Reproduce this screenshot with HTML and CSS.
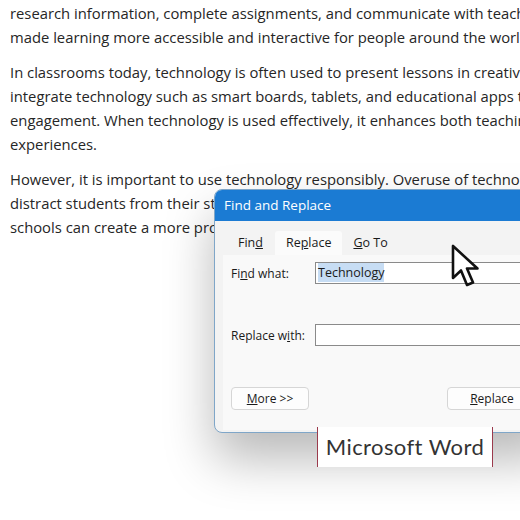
FILE: index.html
```html
<!DOCTYPE html>
<html>
<head>
    <title>Find and Replace</title>
    <link rel="stylesheet" href="styles.css">
</head>
<body>
    <div class="page">
        <p class="para">
            <span class="line">research information, complete assignments, and communicate with teachers and peers.</span>
            <span class="line">made learning more accessible and interactive for people around the world.</span>
        </p>
        <p class="para">
            <span class="line">In classrooms today, technology is often used to present lessons in creative ways.</span>
            <span class="line">integrate technology such as smart boards, tablets, and educational apps to boost</span>
            <span class="line">engagement. When technology is used effectively, it enhances both teaching and learning</span>
            <span class="line">experiences.</span>
        </p>
        <p class="para">
            <span class="line">However, it is important to use technology responsibly. Overuse of technology can</span>
            <span class="line">distract students from their studies and reduce face-to-face interaction. By balancing,</span>
            <span class="line">schools can create a more productive learning environment.</span>
        </p>
    </div>

    <div class="dialog">
        <div class="dialog-title">Find and Replace</div>
        <div class="dialog-body">
            <div class="tabs">
                <span class="tab">Fin<u>d</u></span>
                <span class="tab active">Re<u>p</u>lace</span>
                <span class="tab"><u>G</u>o To</span>
            </div>
            <div class="panel">
                <div class="field">
                    <label>Fi<u>n</u>d what:</label>
                    <div class="input"><span class="selected">Technology</span></div>
                </div>
                <div class="field replace-field">
                    <label>Replace w<u>i</u>th:</label>
                    <div class="input"></div>
                </div>
                <div class="buttons">
                    <button><u>M</u>ore &gt;&gt;</button>
                    <button class="replace-btn"><u>R</u>eplace</button>
                </div>
            </div>
        </div>
    </div>

    <div class="caption">Microsoft Word</div>

    <svg class="cursor" width="32" height="46" viewBox="0 0 32 46">
        <path d="M2 2 L2 34 L10 26.5 L16 41 L22 38.5 L16 24.5 L26.5 24.5 Z" fill="#fff" stroke="#111" stroke-width="2.6" stroke-linejoin="round"/>
    </svg>
</body>
</html>
```

FILE: styles.css
```css
body {
    margin: 0;
    width: 520px;
    height: 520px;
    overflow: hidden;
    position: relative;
    background: #fff;
    font-family: 'Open Sans', sans-serif;
}
.page {
    padding: 1px 0 0 10px;
    color: #262626;
    font-size: 14.8px;
}
.para {
    margin: 0 0 11px;
}
.line {
    display: block;
    white-space: nowrap;
    line-height: 24px;
}
.dialog {
    position: absolute;
    left: 214px;
    top: 189px;
    width: 340px;
    height: 242px;
    background: #f3f3f3;
    border: 1px solid #7fa6c8;
    border-radius: 8px;
    overflow: hidden;
    box-shadow: 0 26px 50px rgba(0, 0, 0, 0.28);
    font-size: 12px;
    color: #1a1a1a;
}
.dialog-title {
    background: #1b7bd3;
    color: #fff;
    height: 31px;
    line-height: 31px;
    padding-left: 9px;
    font-size: 13.5px;
}
.dialog-body {
    padding: 10px 0 0 8px;
}
.tabs {
    display: flex;
    height: 24px;
    padding-left: 4px;
    font-size: 12.5px;
}
.tab {
    padding: 0 11px;
    line-height: 24px;
}
.tab.active {
    background: #fbfbfb;
    border-radius: 3px 3px 0 0;
    padding: 0 11px;
    margin-left: 1px;
}
.panel {
    background: #f9f9f9;
    height: 168px;
    padding: 7px 0 0 8px;
}
.field {
    display: flex;
    align-items: center;
}
.field label {
    width: 84px;
}
.replace-field {
    margin-top: 40px;
}
.input {
    flex: 1;
    height: 20px;
    background: #fff;
    border: 1px solid #8a8a8a;
    padding: 0 2px;
    line-height: 20px;
    font-size: 12.5px;
}
.selected {
    background: #c7ddf4;
    padding: 1px 0;
}
.buttons {
    display: flex;
    justify-content: space-between;
    margin-top: 41px;
}
button {
    font-family: 'Open Sans', sans-serif;
    font-size: 12px;
    color: #1a1a1a;
    background: #fdfdfd;
    border: 1px solid #d6d6d6;
    border-radius: 4px;
    height: 23px;
    width: 78px;
    padding: 0;
}
.replace-btn {
    width: 90px;
    margin-right: 18px;
}
.caption {
    position: absolute;
    left: 317px;
    top: 427px;
    width: 174px;
    height: 40px;
    background: #fff;
    border-left: 1px solid #9b3a4c;
    border-right: 1px solid #9b3a4c;
    text-align: center;
    line-height: 40px;
    font-family: 'Lato', sans-serif;
    font-size: 22px;
    letter-spacing: 0.4px;
    color: #333;
}
.cursor {
    position: absolute;
    left: 451px;
    top: 244px;
}
```
